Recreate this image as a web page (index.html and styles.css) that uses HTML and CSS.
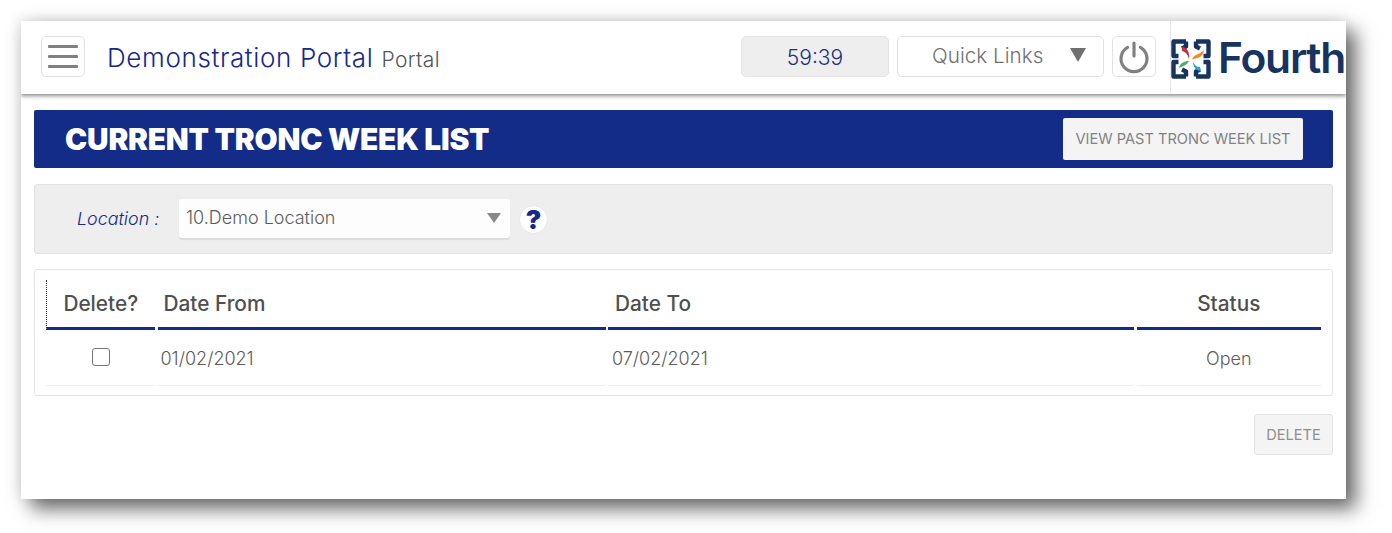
FILE: index.html
```html
<!DOCTYPE html>
<html lang="en">
<head>
<meta charset="utf-8">
<title>Current Tronc Week List</title>
<link rel="stylesheet" href="styles.css">
</head>
<body>
<div class="window">
  <header class="topbar">
    <button class="menu-btn" aria-label="Menu"><span></span><span></span><span></span></button>
    <div class="title">Demonstration Portal <small>Portal</small></div>
    <div class="timer">59:39</div>
    <div class="quick">Quick Links<i class="tri"></i></div>
    <button class="power" aria-label="Log out">
      <svg width="34" height="34" viewBox="0 0 34 34" fill="none" stroke="#808080" stroke-width="3.2" stroke-linecap="round"><path d="M10.6 7.4a13 13 0 1 0 12.8 0"/><path d="M17 3v13"/></svg>
    </button>
    <div class="logo">
      <svg class="mark" width="40" height="40" viewBox="0 0 40 40" fill="none">
        <g stroke="#17335f" stroke-width="4.4" stroke-linejoin="round">
          <path d="M15 2.5H2.5v14.5h5"/><path d="M25 2.5h12.500v14.500h-5"/><path d="M15 37.500H2.500V23h5"/><path d="M25 37.500h12.500V23h-5"/>
          <path d="M15 2.500v5l-4 2"/><path d="M25 2.500v5l4 2"/><path d="M15 37.500v-5l-4-2"/><path d="M25 37.500v-5l4-2"/>
        </g>
        <path d="M11 8c5 0 8 5 7 12-1-4-3-7-7-8z" fill="#c8313f"/>
        <path d="M33 11c0 5-5 9-12 9 1-2 2-3 4-4 3-1 6-3 8-5z" fill="#f08a24"/>
        <path d="M8 29c1-5 5-7 10-7-1 3-5 5-10 7z" fill="#4caf6a"/>
        <path d="M30 32c-5 0-8-4-8-10 1 4 4 6 7 6z" fill="#2aa3cf"/>
      </svg>
      <span class="logo-text">Fourth</span>
      <i class="logo-dot"></i>
    </div>
  </header>
  <main class="content">
    <section class="banner">
      <h1>CURRENT TRONC WEEK LIST</h1>
      <button class="past-btn">VIEW PAST TRONC WEEK LIST</button>
    </section>
    <section class="filter">
      <label class="loc-label">Location :</label>
      <div class="select">10.Demo Location<i class="tri small"></i></div>
      <div class="help">?</div>
    </section>
    <section class="card">
      <div class="grid">
        <div class="th first">Delete?</div>
        <div class="th">Date From</div>
        <div class="th third">Date To</div>
        <div class="th center">Status</div>
        <div class="td center"><span class="check"></span></div>
        <div class="td from">01/02/2021</div>
        <div class="td to">07/02/2021</div>
        <div class="td center">Open</div>
      </div>
    </section>
    <div class="actions"><button class="delete-btn">DELETE</button></div>
  </main>
</div>
</body>
</html>
```

FILE: styles.css
```css
* { box-sizing: border-box; }
html, body { margin: 0; height: 533px; overflow: hidden; background: #fff; }
body { padding: 21px 46px 34px 21px; font-family: Inter, "Liberation Sans", sans-serif; }
button { font-family: inherit; padding: 0; }

.window { width: 1325px; height: 478px; background: #fff; box-shadow: 10px 10px 18px rgba(0,0,0,.58), -2px -2px 14px rgba(0,0,0,.12); }

.topbar { height: 73px; display: flex; align-items: center; padding-left: 20px; background: #fff; box-shadow: 0 2px 4px rgba(0,0,0,.45); overflow: hidden; clip-path: inset(0 0 -8px 0); }
.menu-btn { width: 44px; height: 41px; margin-bottom: 2px; background: #fff; border: 1px solid #e2e2e2; border-radius: 5px; display: flex; flex-direction: column; justify-content: center; align-items: center; gap: 7px; }
.menu-btn span { display: block; width: 30px; height: 3px; background: #808080; border-radius: 1px; }
.title { margin-left: 22px; width: 634px; color: #15298a; font-size: 26px; letter-spacing: .65px; font-weight: 300; white-space: nowrap; }
.title small { font-size: 21px; letter-spacing: .4px; color: #555; font-weight: 300; }
.timer { width: 148px; height: 41px; margin-bottom: 2px; background: #eee; border: 1px solid #e4e4e4; border-radius: 5px; display: flex; align-items: center; justify-content: center; color: #1c2f80; font-size: 21px; font-weight: 300; padding-top: 2px; }
.quick { width: 207px; height: 41px; margin: 0 0 2px 8px; border: 1px solid #e2e2e2; border-radius: 5px; display: flex; align-items: center; padding: 0 17px 3px 34px; justify-content: space-between; color: #707070; font-size: 20.7px; font-weight: 300; }
.tri { width: 0; height: 0; border-left: 8.5px solid transparent; border-right: 8.5px solid transparent; border-top: 14px solid #707070; display: block; }
.tri.small { border-left-width: 7px; border-right-width: 7px; border-top-width: 10px; border-top-color: #888; }
.power { width: 44px; height: 41px; margin: 0 0 2px 8px; background: #fff; border: 1px solid #e2e2e2; border-radius: 5px; display: flex; align-items: center; justify-content: center; }
.logo { margin-left: 14px; flex: none; width: 176px; height: 73px; border-left: 1px solid #e6e6e6; display: flex; align-items: center; overflow: hidden; }
.mark { flex: none; margin-top: 3px; }
.logo-text { color: #17335f; font-size: 42.500px; font-weight: 600; margin-left: 7px; letter-spacing: -1.2px; line-height: 1; margin-top: 2px; }
.logo-dot { flex: none; width: 3px; height: 5px; margin: 30px 0 0 1px; background: #17335f; }

.content { padding: 16px 13px 0; }
.banner { height: 58px; margin-bottom: 16px; background: #132c87; border-radius: 2px; display: flex; align-items: center; justify-content: space-between; padding: 0 30px 0 31px; }
.banner h1 { margin: 0; color: #fff; font-size: 29.8px; font-weight: 900; letter-spacing: -.2px; }
.past-btn { width: 240px; height: 42px; background: #f4f4f4; border: 0; border-radius: 2px; color: #828282; font-size: 14.6px; font-weight: 400; }

.filter { height: 70px; margin-bottom: 15px; background: #eee; border: 1px solid #e2e2e2; border-radius: 3px; display: flex; align-items: center; padding-left: 42px; }
.loc-label { color: #15298a; font-size: 17.9px; font-style: italic; font-weight: 300; width: 102px; margin-bottom: 2px; }
.select { width: 331px; height: 39px; background: #fdfdfd; border-radius: 3px; box-shadow: 0 2px 1px #dcdcdc; display: flex; align-items: center; justify-content: space-between; padding: 0 9px 1px 7px; color: #5c5c5c; font-size: 18px; font-weight: 300; margin-top: -2px; }
.help { width: 29px; height: 29px; margin: 1px 0 0 9px; background: #fff; border: 1px solid #e6e6e6; border-radius: 50%; display: flex; align-items: center; justify-content: center; color: #15298a; font-size: 26px; font-weight: 900; }

.card { height: 127px; background: #fff; border: 1px solid #e4e4e4; border-radius: 3px; padding: 10px 11px 0 10.5px; }
.grid { display: grid; grid-template-columns: 109.5px 448px 526px 184.5px; column-gap: 2.5px; }
.th { height: 50px; border-bottom: 3px solid #132c87; color: #4f4f4f; font-size: 20.8px; font-weight: 500; padding: 11px 0 0 6px; white-space: nowrap; }
.th.first { text-align: center; padding-left: 0; border-left: 1px dotted #15298a; }
.th.center { text-align: center; padding-left: 0; }
.th.third { padding-left: 7px; }
.td { height: 56px; border-bottom: 1px solid #efefef; color: #5c5c5c; font-size: 18px; font-weight: 300; display: flex; align-items: center; padding-top: 1px; }
.td.center { justify-content: center; }
.td.from { padding-left: 3px; }
.td.to { padding-left: 4px; }
.check { width: 18px; height: 18px; border: 1px solid #767676; border-radius: 3px; background: #fff; margin: 0 0 3px 2px; }

.actions { display: flex; justify-content: flex-end; margin-top: 18px; }
.delete-btn { width: 79px; height: 41px; background: #f4f4f4; border: 1px solid #e4e4e4; border-radius: 3px; color: #8f8f8f; font-size: 14.6px; font-weight: 400; }
```
